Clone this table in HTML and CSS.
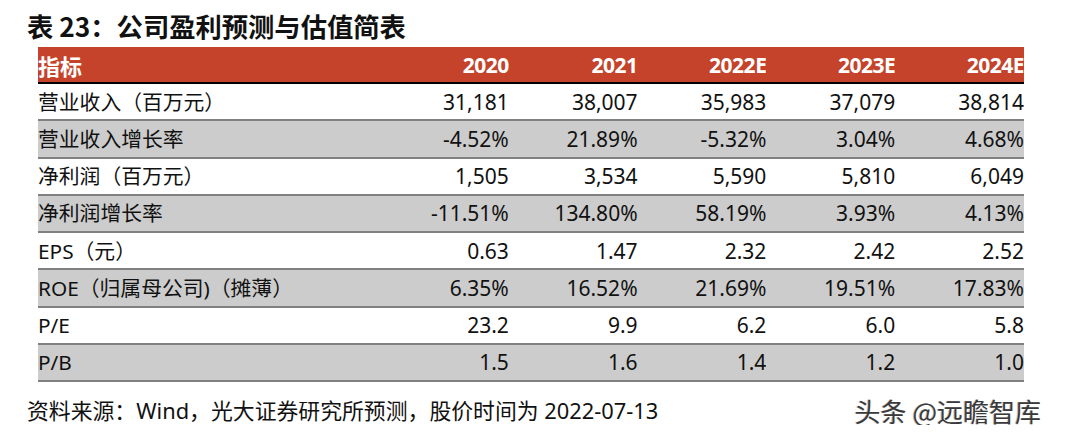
FILE: index.html
```html
<!DOCTYPE html>
<html lang="zh-CN">
<head>
<meta charset="utf-8">
<title>表 23：公司盈利预测与估值简表</title>
<link rel="stylesheet" href="styles.css">
</head>
<body>
<div class="page">
  <h1 class="title">表 23：公司盈利预测与估值简表</h1>
  <table class="fin">
    <thead>
      <tr><th class="lbl">指标</th><th>2020</th><th>2021</th><th>2022E</th><th>2023E</th><th>2024E</th></tr>
    </thead>
    <tbody>
      <tr><td class="lbl">营业收入（百万元）</td><td>31,181</td><td>38,007</td><td>35,983</td><td>37,079</td><td>38,814</td></tr>
      <tr class="alt"><td class="lbl">营业收入增长率</td><td>-4.52%</td><td>21.89%</td><td>-5.32%</td><td>3.04%</td><td>4.68%</td></tr>
      <tr><td class="lbl">净利润（百万元）</td><td>1,505</td><td>3,534</td><td>5,590</td><td>5,810</td><td>6,049</td></tr>
      <tr class="alt"><td class="lbl">净利润增长率</td><td>-11.51%</td><td>134.80%</td><td>58.19%</td><td>3.93%</td><td>4.13%</td></tr>
      <tr><td class="lbl">EPS（元）</td><td>0.63</td><td>1.47</td><td>2.32</td><td>2.42</td><td>2.52</td></tr>
      <tr class="alt"><td class="lbl">ROE（归属母公司)（摊薄）</td><td>6.35%</td><td>16.52%</td><td>21.69%</td><td>19.51%</td><td>17.83%</td></tr>
      <tr><td class="lbl">P/E</td><td>23.2</td><td>9.9</td><td>6.2</td><td>6.0</td><td>5.8</td></tr>
      <tr class="alt"><td class="lbl">P/B</td><td>1.5</td><td>1.6</td><td>1.4</td><td>1.2</td><td>1.0</td></tr>
    </tbody>
  </table>
  <div class="foot">
    <p class="source">资料来源：Wind，光大证券研究所预测，股价时间为 2022-07-13</p>
    <span class="mark">头条 @远瞻智库</span>
  </div>
</div>
</body>
</html>
```

FILE: styles.css
```css
html, body {
  margin: 0;
  padding: 0;
  background: #ffffff;
}
.page {
  padding: 11px 0 0 27px;
  width: 1038px;
  font-family: "Noto Sans", "Noto Sans CJK SC", sans-serif;
  color: #111111;
}
.title {
  margin: 0;
  font-family: "Noto Sans CJK SC", sans-serif;
  font-weight: 700;
  font-size: 26.3px;
  line-height: 30px;
  height: 36px;
  color: #111111;
}
.fin {
  margin-left: 11px;
  width: 986px;
  border-collapse: collapse;
  table-layout: fixed;
  font-size: 21px;
}
.fin th, .fin td {
  padding: 0;
  text-align: right;
  white-space: nowrap;
  overflow: hidden;
}
.fin .lbl {
  text-align: left;
  width: 342px;
  font-family: "Noto Sans", "Noto Sans CJK SC", sans-serif;
  font-size: 20.8px;
}
.fin thead th {
  background: #c4432a;
  color: #ffffff;
  font-weight: 700;
  height: 35px;
  border-bottom: 2px solid #000000;
  font-size: 21px;
  letter-spacing: -0.5px;
}
.fin thead th.lbl {
  font-family: "Noto Sans CJK SC", sans-serif;
  font-size: 22px;
  letter-spacing: 0;
}
.fin tbody td {
  height: 35.25px;
  border-bottom: 2px solid #808080;
  line-height: 28px;
}
.fin tbody tr.alt td {
  background: #cccccc;
}
.foot {
  display: flex;
  justify-content: space-between;
  align-items: center;
  margin-top: 15px;
}
.source {
  margin: 0;
  font-family: "Noto Sans", "Noto Sans CJK SC", sans-serif;
  font-size: 21.85px;
  line-height: 26px;
}
.mark {
  font-family: "Noto Sans CJK SC", sans-serif;
  font-size: 26px;
  line-height: 28px;
  margin-right: 24px;
  color: #3a3a3a;
  text-shadow: 1px 1px 0 #ffffff, -1px 0 0 #bbbbbb;
}
```
